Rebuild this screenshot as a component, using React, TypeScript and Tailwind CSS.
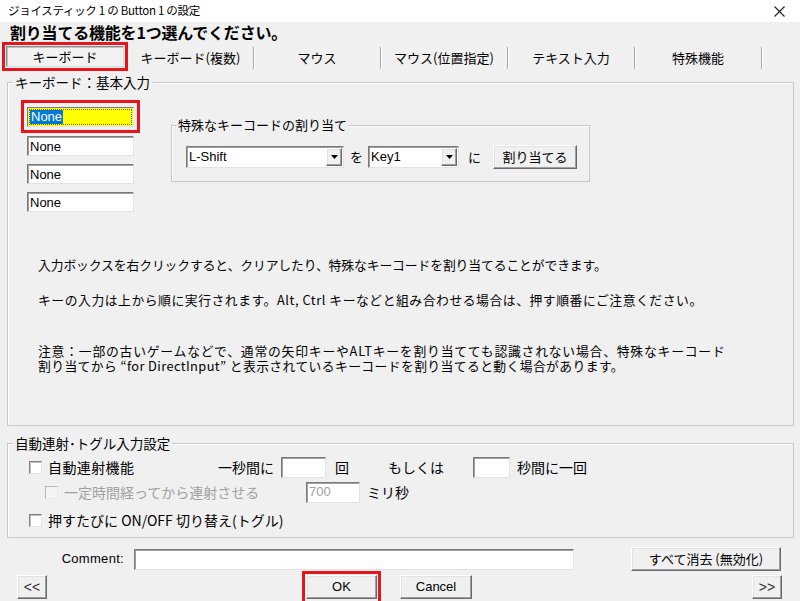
import React from "react";

const jp = "font-['Noto_Sans_CJK_JP',sans-serif]";
const lat = "font-['Liberation_Sans','Noto_Sans_CJK_JP',sans-serif]";
const sunken =
  "bg-white border border-t-[#7a7a7a] border-l-[#7a7a7a] border-r-[#e3e3e3] border-b-[#e3e3e3] shadow-[inset_1px_1px_0_#a0a0a0]";
const raised =
  "bg-[#f0f0f0] border border-t-[#ffffff] border-l-[#ffffff] border-r-[#696969] border-b-[#696969] shadow-[inset_-1px_-1px_0_#a0a0a0,inset_1px_1px_0_#e3e3e3]";

function Check({ disabled }: { disabled?: boolean }) {
  return (
    <div
      className={
        "w-[13px] h-[13px] shrink-0 border " +
        (disabled
          ? "bg-[#f4f4f4] border-t-[#b8b8b8] border-l-[#b8b8b8] border-r-[#e8e8e8] border-b-[#e8e8e8]"
          : "bg-white border-t-[#808080] border-l-[#808080] border-r-[#e3e3e3] border-b-[#e3e3e3] shadow-[inset_1px_1px_0_#c0c0c0]")
      }
    />
  );
}

function Select({ w, value }: { w: string; value: string }) {
  return (
    <div className={"flex items-center h-[22px] " + w + " " + sunken}>
      <span className={"pl-[2px] text-[13px] leading-none text-black " + lat}>{value}</span>
      <div className={"ml-auto mr-[1px] w-[16px] h-[18px] flex items-center justify-center " + raised}>
        <svg width="7" height="4" viewBox="0 0 7 4">
          <polygon points="0,0 7,0 3.5,4" fill="#000" />
        </svg>
      </div>
    </div>
  );
}

function Btn({ className, children }: { className: string; children: React.ReactNode }) {
  return (
    <div className={"flex items-center justify-center text-[13px] text-black " + raised + " " + className}>
      {children}
    </div>
  );
}

export default function App() {
  const tabs = ["キーボード(複数)", "マウス", "マウス(位置指定)", "テキスト入力", "特殊機能"];
  return (
    <div className={"w-[800px] h-[601px] bg-[#f0f0f0] overflow-hidden text-black " + jp}>
      {/* title bar */}
      <div className="h-[22px] bg-white flex items-center pl-[8px] pr-[15px]">
        <span className="text-[11.5px] tracking-[-0.3px] text-black">ジョイスティック 1 の Button 1 の設定</span>
        <svg className="ml-auto" width="11" height="11" viewBox="0 0 11 11">
          <path d="M0.5 0.5 L10.5 10.5 M10.5 0.5 L0.5 10.5" stroke="#222" strokeWidth="1.1" />
        </svg>
      </div>
      {/* heading */}
      <div className="h-[20px] pl-[10px] flex items-center">
        <span className="text-[16px] font-bold leading-none tracking-[-0.2px]">割り当てる機能を1つ選んでください。</span>
      </div>
      {/* tabs */}
      <div className="h-[29px] flex items-center pl-[2px]">
        <div className="w-[126px] h-[29px] border-[3px] border-[#e8141c] p-[1px]">
          <div className="w-full h-full flex items-center justify-center border border-t-[#8a8a8a] border-l-[#8a8a8a] border-r-[#d8d8d8] border-b-[#d8d8d8] bg-[#f2f2f2] shadow-[inset_1px_1px_0_#c4c4c4]">
            <span className="text-[13px]">キーボード</span>
          </div>
        </div>
        {tabs.map((t, i) => (
          <div
            key={t}
            className={(i === 0 ? "w-[126px]" : "w-[127px]") + " h-[22px] flex items-center justify-center border-r border-r-[#a8a8a8] shadow-[1px_0_0_#ffffff] mt-[3px]"}
          >
            <span className="text-[13px]">{t}</span>
          </div>
        ))}
      </div>
      {/* group 1 */}
      <div className="mt-[11px] ml-[7px] w-[787px] h-[344px] relative border border-[#c8c8c8] shadow-[inset_1px_1px_0_#ffffff]">
        <span className="absolute left-[5px] -top-[10px] px-[2px] bg-[#f0f0f0] text-[13.5px] leading-[18px]">
          キーボード：基本入力
        </span>
        <div className="flex items-start">
          <div className="ml-[13px] pt-[17px] flex flex-col">
            <div className="w-[119px] h-[33px] border-[3px] border-[#e8141c] pt-[4px] pl-[3px]">
              <div className="w-[107px] h-[20px] flex items-center bg-[#ffff00] border border-t-[#7a7a7a] border-l-[#7a7a7a] border-r-[#e3e3e3] border-b-[#e3e3e3]">
                <div className="ml-[1px] mr-[1px] w-full h-[16px] flex items-center border border-dotted border-[#666]">
                  <span className={"bg-[#0078d7] text-white text-[13px] leading-[14px] px-[1px] " + lat}>None</span>
                </div>
              </div>
            </div>
            {[0, 1, 2].map((i) => (
              <div
                key={i}
                className={"w-[107px] h-[20px] ml-[6px] flex items-center " + sunken + (i === 0 ? " mt-[3px]" : " mt-[8px]")}
              >
                <span className={"pl-[2px] text-[13px] leading-none " + lat}>None</span>
              </div>
            ))}
          </div>
          {/* special keycode group */}
          <div className="ml-[31px] mt-[42px] w-[419px] h-[57px] relative border border-[#c8c8c8] shadow-[inset_1px_1px_0_#ffffff]">
            <span className="absolute left-[5px] -top-[10px] px-[1px] bg-[#f0f0f0] text-[13px] leading-[18px]">
              特殊なキーコードの割り当て
            </span>
            <div className="pt-[17px] pl-[14px] flex items-center h-[44px]">
              <Select w="w-[158px]" value="L-Shift" />
              <span className="ml-[6px] w-[13px] text-[13px] text-center">を</span>
              <div className="ml-[5px]">
                <Select w="w-[91px]" value="Key1" />
              </div>
              <span className="ml-[9px] w-[13px] text-[13px] text-center">に</span>
              <Btn className="ml-[12px] w-[84px] h-[24px]">割り当てる</Btn>
            </div>
          </div>
        </div>
        <div className="pl-[30px] text-[12.8px]">
          <p className="mt-[45px] leading-[16px] tracking-[-0.1px]">
            入力ボックスを右クリックすると、クリアしたり、特殊なキーコードを割り当てることができます。
          </p>
          <p className="mt-[19px] leading-[16px] tracking-[0.55px]">
            キーの入力は上から順に実行されます。Alt, Ctrl キーなどと組み合わせる場合は、押す順番にご注意ください。
          </p>
          <p className="mt-[35px] leading-[15px] tracking-[0.8px]">
            注意：一部の古いゲームなどで、通常の矢印キーやALTキーを割り当てても認識されない場合、特殊なキーコード
          </p>
          <p className="leading-[15px] tracking-[0.4px]">
            割り当てから “for DirectInput” と表示されているキーコードを割り当てると動く場合があります。
          </p>
        </div>
      </div>
      {/* group 2 */}
      <div className="mt-[17px] ml-[7px] w-[787px] h-[95px] relative border border-[#c8c8c8] shadow-[inset_1px_1px_0_#ffffff] text-[14px]">
        <span className="absolute left-[5px] -top-[10px] px-[2px] bg-[#f0f0f0] text-[13.5px] leading-[18px]">
          自動連射･トグル入力設定
        </span>
        <div className="pt-[12px] pl-[21px] flex items-center h-[34px]">
          <Check />
          <span className="ml-[6px] w-[170px] tracking-[0.4px]">自動連射機能</span>
          <span className="w-[63px]">一秒間に</span>
          <div className={"w-[45px] h-[21px] " + sunken} />
          <span className="ml-[9px] w-[53px]">回</span>
          <span className="w-[85px]">もしくは</span>
          <div className={"w-[37px] h-[21px] " + sunken} />
          <span className="ml-[7px]">秒間に一回</span>
        </div>
        <div className="mt-[3px] pl-[37px] flex items-center h-[22px]">
          <Check disabled />
          <span className="ml-[6px] w-[242px] text-[#a0a0a0]">一定時間経ってから連射させる</span>
          <div className={"w-[54px] h-[21px] flex items-center " + sunken}>
            <span className={"pl-[2px] text-[13px] text-[#a0a0a0] " + lat}>700</span>
          </div>
          <span className="ml-[7px]">ミリ秒</span>
        </div>
        <div className="mt-[6px] pl-[21px] flex items-center h-[22px]">
          <Check />
          <span className="ml-[6px]">押すたびに ON/OFF 切り替え(トグル)</span>
        </div>
      </div>
      {/* comment row */}
      <div className="mt-[9px] h-[24px] flex items-center">
        <span className={"w-[124px] text-right text-[13px] tracking-[0.3px] " + lat}>Comment:</span>
        <div className={"ml-[10px] w-[440px] h-[21px] " + sunken} />
        <Btn className="ml-[57px] w-[150px] h-[24px]">すべて消去 (無効化)</Btn>
      </div>
      {/* buttons row */}
      <div className="h-[31px] flex items-start">
        <Btn className={"mt-[4px] ml-[17px] w-[30px] h-[24px] " + lat}>
          <span className="text-[#333] text-[14px]">&lt;&lt;</span>
        </Btn>
        <div className="ml-[255px] w-[79px] h-[33px] border-[3px] border-[#e8141c] pt-[1px] pl-[1px]">
          <Btn className={"w-[71px] h-[24px] " + lat}>OK</Btn>
        </div>
        <Btn className={"mt-[4px] ml-[19px] w-[72px] h-[24px] " + lat}>Cancel</Btn>
        <Btn className={"mt-[4px] ml-[280px] w-[30px] h-[24px] " + lat}>
          <span className="text-[#333] text-[14px]">&gt;&gt;</span>
        </Btn>
      </div>
    </div>
  );
}
